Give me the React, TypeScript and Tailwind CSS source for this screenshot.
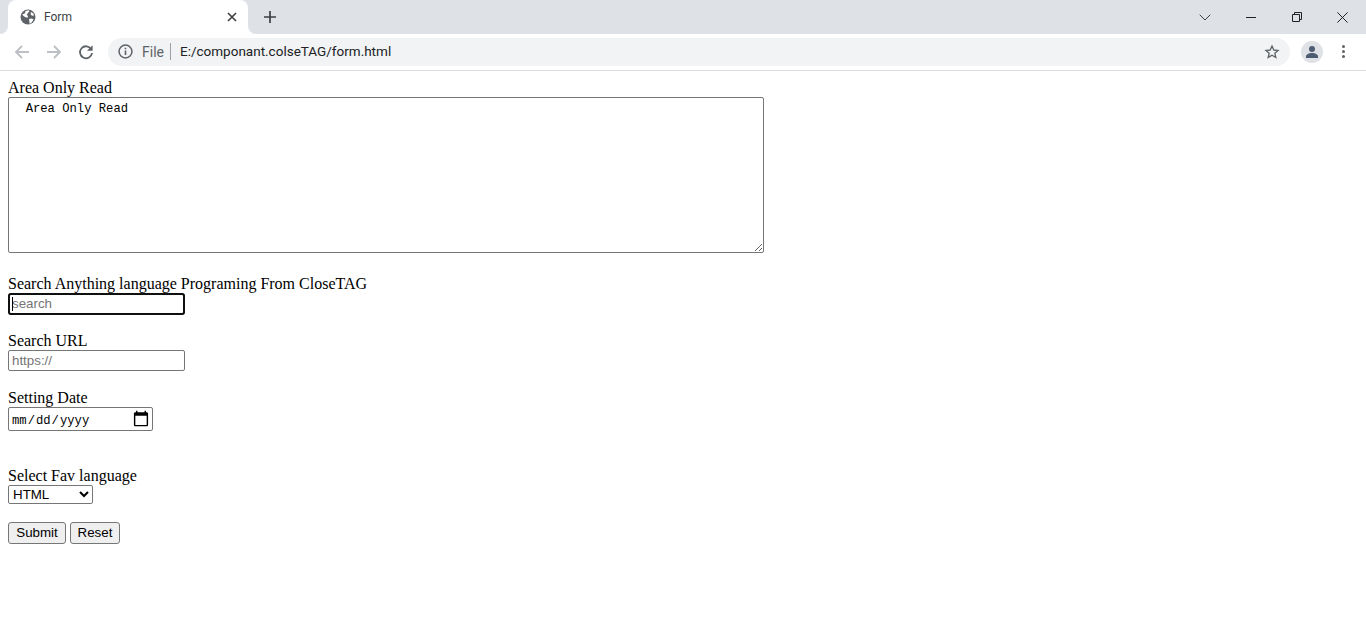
import React from "react";

function Flare({ side }: { side: "left" | "right" }) {
  return (
    <svg
      width="8"
      height="8"
      viewBox="0 0 8 8"
      className={`absolute bottom-0 ${side === "left" ? "-left-2" : "-right-2"}`}
    >
      <path d={side === "left" ? "M8 0V8H0A8 8 0 0 0 8 0Z" : "M0 0V8H8A8 8 0 0 1 0 0Z"} fill="#fff" />
    </svg>
  );
}

function TabStrip() {
  return (
    <div className="flex h-[34px] items-center bg-[#dee1e6] pl-2 text-[#3c4043]">
      <div className="relative flex h-[34px] w-[240px] items-center rounded-t-lg bg-white pl-3 pr-[9px]">
        <Flare side="left" />
        <svg width="16" height="16" viewBox="0 0 16 16" className="shrink-0">
          <circle cx="8" cy="8" r="7.5" fill="#5f6368" />
          <path
            d="M2.2 5.5 5 4.2 5.6 2l3-.8.9 1.4-1.7 1.4-1 1.7L8 7l-.2 1.6H6L3.8 7.2zM9 10l2.6-.6 2 1.2-2.4 3.4-1.6.8-.2-2.4zM11 3l2.4 1.6.6 2-2 .2-1.4-1.6z"
            fill="#fff"
          />
        </svg>
        <span className="ml-2 font-['Roboto',sans-serif] text-xs">Form</span>
        <svg width="10" height="10" viewBox="0 0 10 10" className="ml-auto mr-[2px]">
          <path d="M1 1l8 8M9 1L1 9" stroke="#3c4043" strokeWidth="1.6" />
        </svg>
        <Flare side="right" />
      </div>
      <svg width="12" height="12" viewBox="0 0 12 12" className="ml-4">
        <path d="M6 0v12M0 6h12" stroke="#3c4043" strokeWidth="1.7" />
      </svg>
      <div className="ml-auto flex items-center">
        <svg width="12" height="7" viewBox="0 0 12 7" className="mr-[35px]">
          <path d="M.7.7 6 6l5.3-5.3" fill="none" stroke="#3c4043" strokeWidth="1" />
        </svg>
        <div className="mr-[36px] h-px w-[10px] bg-[#202124]" />
        <svg width="10" height="10" viewBox="0 0 10 10" className="mr-[35px]">
          <path d="M.5 2.5h7v7h-7zM2.5 2.5v-2h7v7h-2" fill="none" stroke="#202124" strokeWidth="1" />
        </svg>
        <svg width="11" height="11" viewBox="0 0 11 11" className="mr-[18px]">
          <path d="M.4.4l10.2 10.2M10.6.4.4 10.6" stroke="#202124" strokeWidth="1" />
        </svg>
      </div>
    </div>
  );
}

function Toolbar() {
  return (
    <div className="flex h-[37px] items-center border-b border-[#dadce0] bg-white pb-[1px]">
      <svg width="16" height="16" viewBox="0 0 16 16" className="ml-[14px]">
        <path d="M15 8H2M8 2 2 8l6 6" fill="none" stroke="#bcc0c4" strokeWidth="1.8" />
      </svg>
      <svg width="16" height="16" viewBox="0 0 16 16" className="ml-4">
        <path d="M1 8h13M8 2l6 6-6 6" fill="none" stroke="#bcc0c4" strokeWidth="1.8" />
      </svg>
      <svg width="16" height="16" viewBox="0 0 16 16" className="ml-4">
        <path d="M13.2 5.2A6 6 0 1 0 14 9" fill="none" stroke="#5f6368" strokeWidth="1.8" />
        <path d="M14.6 1.2v5.6H9z" fill="#5f6368" />
      </svg>
      <div className="ml-[14px] flex h-[28px] w-[1182px] items-center rounded-full bg-[#f1f3f4] font-['Roboto',sans-serif] text-sm">
        <svg width="15" height="15" viewBox="0 0 14 14" className="ml-[10px]">
          <circle cx="7" cy="7" r="6" fill="none" stroke="#5f6368" strokeWidth="1.4" />
          <path d="M7 6v4.2M7 3.4v1.5" stroke="#5f6368" strokeWidth="1.5" />
        </svg>
        <span className="ml-[9px] text-[#5f6368]">File</span>
        <div className="ml-[6px] h-[17px] w-px bg-[#9aa0a6]" />
        <span className="ml-[9px] text-[13.5px] text-[#202124]">E:/componant.colseTAG/form.html</span>
        <svg width="16" height="16" viewBox="0 0 24 24" className="ml-auto mr-[10px]">
          <path
            d="M12 3l2.7 6 6.3.6-4.8 4.2 1.5 6.4L12 16.8l-5.7 3.4 1.5-6.4L3 9.6 9.3 9z"
            fill="none"
            stroke="#5f6368"
            strokeWidth="2"
          />
        </svg>
      </div>
      <div className="ml-[11px] flex h-[22px] w-[22px] items-center justify-center rounded-full bg-[#dee1e6]">
        <svg width="14" height="14" viewBox="0 0 14 14">
          <circle cx="7" cy="4" r="3" fill="#4d5b73" />
          <path d="M1 13v-1.5C1 9.5 4 8 7 8s6 1.500 6 3.500V13z" fill="#4d5b73" />
        </svg>
      </div>
      <div className="ml-[19px] flex flex-col gap-[2px]">
        <div className="h-[3px] w-[3px] rounded-full bg-[#5f6368]" />
        <div className="h-[3px] w-[3px] rounded-full bg-[#5f6368]" />
        <div className="h-[3px] w-[3px] rounded-full bg-[#5f6368]" />
      </div>
    </div>
  );
}

const fieldClass =
  "block w-[177px] border border-[#767676] px-[3px] font-['Liberation_Sans',sans-serif] text-[13.33px] text-black placeholder:text-[#757575]";

function FormPage() {
  return (
    <form className="flex flex-col items-start p-2 font-['Liberation_Serif',serif] text-base leading-[18px] text-black">
      <label>Area Only Read</label>
      <textarea
        readOnly
        value={"  Area Only Read"}
        className="block h-[156px] w-[756px] rounded-[2px] border border-[#767676] px-[2px] pt-[4px] pb-[2px] font-['Liberation_Mono',monospace] text-[12.2px] leading-[15px] whitespace-pre-wrap"
      />
      <label className="mt-[22px]">Search Anything language Programing From CloseTAG</label>
      <div className="relative">
        <input
          autoFocus
          type="search"
          placeholder="search"
          className={`${fieldClass} h-[22px] rounded-[3px] pb-[2px] caret-transparent outline-2 -outline-offset-2 outline-[#101010]`}
        />
        <div className="absolute left-[4px] top-[4px] h-[14px] w-px bg-black" />
      </div>
      <label className="mt-[17px]">Search URL</label>
      <input type="url" placeholder="https://" className={`${fieldClass} h-[21px] rounded-[2px] py-[1px]`} />
      <label className="mt-[18px]">Setting Date</label>
      <input
        type="date"
        className="block h-[24px] w-[145px] rounded-[2px] border border-[#767676] px-[2px] pt-[3px] font-['Liberation_Mono',monospace] text-[12.2px] [&::-webkit-calendar-picker-indicator]:m-0 [&::-webkit-calendar-picker-indicator]:-mt-[3px] [&::-webkit-calendar-picker-indicator]:h-[18px] [&::-webkit-calendar-picker-indicator]:w-[18px] [&::-webkit-calendar-picker-indicator]:p-0"
      />
      <label className="mt-9">Select Fav language</label>
      <select className="block h-[19px] w-[85px] appearance-auto rounded-[2px] border border-[#767676] bg-white font-['Liberation_Sans',sans-serif] text-[13.33px] leading-[15px]">
        <option>HTML</option>
        <option>CSS</option>
        <option>JavaScript</option>
      </select>
      <div className="mt-[18px] flex gap-1 font-['Liberation_Sans',sans-serif] text-[13.33px]">
        <button type="button" className="h-[22px] w-[58px] rounded-[3px] border border-[#767676] bg-[#efefef]">
          Submit
        </button>
        <button type="button" className="h-[22px] w-[50px] rounded-[3px] border border-[#767676] bg-[#efefef]">
          Reset
        </button>
      </div>
    </form>
  );
}

export default function App() {
  return (
    <div className="h-screen overflow-hidden bg-white">
      <TabStrip />
      <Toolbar />
      <FormPage />
    </div>
  );
}
